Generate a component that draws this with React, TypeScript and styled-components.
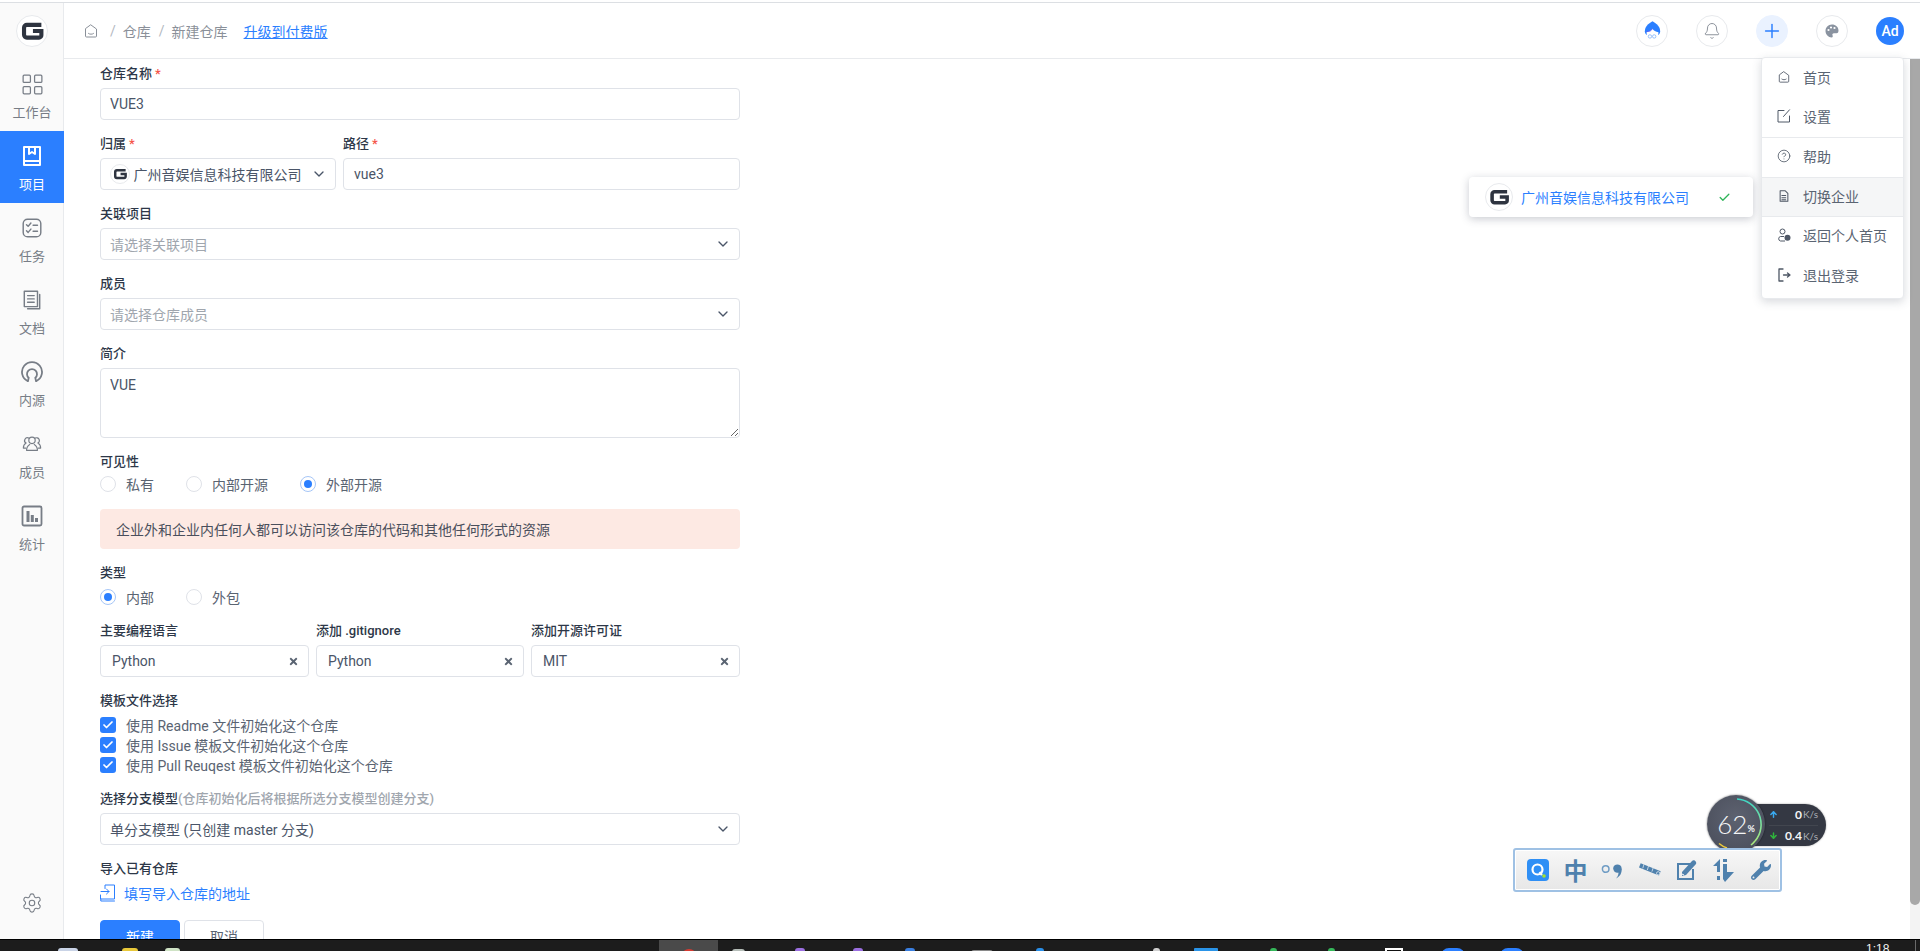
import React from "react";
import styled, { createGlobalStyle } from "styled-components";
import { ArrowDown, ArrowUp, Bell, Check, ChevronDown, CircleHelp, LayoutGrid, Plus, Settings } from "lucide-react";
import { FaTimes, FaWrench } from "react-icons/fa";

const BLUE = "#2b7fff";

const GlobalStyle = createGlobalStyle`
  html, body {
    margin: 0;
    height: 100%;
    overflow: hidden;
    background: #fff;
  }
  body {
    font-family: Roboto, "Noto Sans CJK SC", sans-serif;
    font-size: 14px;
    color: #4a5568;
  }
  * { box-sizing: border-box; }
`;

// page frame
const Page = styled.div`
  position: relative;
  width: 100vw;
  height: 100vh;
  display: flex;
  flex-direction: column;
  overflow: hidden;
  padding-top: 2px;
`;

const TopLine = styled.div`
  height: 1px;
  background: #dcdfe3;
  flex: none;
`;

const Main = styled.div`
  flex: 1;
  min-height: 0;
  display: flex;
`;

const Sidebar = styled.aside`
  width: 64px;
  flex: none;
  display: flex;
  flex-direction: column;
  background: #fafafa;
  border-right: 1px solid #e8eaed;
`;

const SideLogo = styled.div`
  height: 56px;
  flex: none;
  display: flex;
  align-items: center;
  justify-content: center;
`;

const SideItem = styled.div<{ $active?: boolean }>`
  width: 64px;
  height: 72px;
  flex: none;
  display: flex;
  flex-direction: column;
  align-items: center;
  padding-top: 14px;
  gap: 9px;
  font-size: 13px;
  line-height: 18px;
  color: ${(p) => (p.$active ? "#fff" : "#777d86")};
  background: ${(p) => (p.$active ? BLUE : "transparent")};
`;

const SideIcon = styled.span`
  height: 22px;
  flex: none;
  display: flex;
  align-items: center;
  justify-content: center;
`;

const SideBottom = styled.div`
  margin-top: auto;
  height: 47px;
  display: flex;
  justify-content: center;
  color: #777d86;
`;

const Right = styled.div`
  flex: 1;
  min-width: 0;
  display: flex;
  flex-direction: column;
`;

const Header = styled.header`
  height: 56px;
  flex: none;
  display: flex;
  align-items: center;
  padding: 0 16px 0 20px;
  border-bottom: 1px solid #e8eaed;
`;

const Crumbs = styled.nav`
  display: flex;
  align-items: center;
  color: #8a9099;
  font-size: 14px;
  & > svg { margin-right: 4px; }
`;

const CrumbSep = styled.span`
  margin: 0 7px 0 8px;
  color: #b3b8bf;
`;

const UpgradeLink = styled.a`
  margin-left: 16px;
  color: ${BLUE};
  text-decoration: underline;
`;

const HeaderTools = styled.div`
  margin-left: auto;
  display: flex;
  align-items: center;
  gap: 28px;
`;

const RoundButton = styled.div<{ $active?: boolean }>`
  width: 32px;
  height: 32px;
  border-radius: 50%;
  display: flex;
  align-items: center;
  justify-content: center;
  border: 1px solid ${(p) => (p.$active ? "#eaf2ff" : "#e8eaed")};
  background: ${(p) => (p.$active ? "#eaf2ff" : "#fff")};
  color: ${(p) => (p.$active ? BLUE : "#8a9099")};
`;

const Avatar = styled.div`
  width: 28px;
  height: 28px;
  border-radius: 50%;
  background: ${BLUE};
  color: #fff;
  font-size: 14px;
  font-weight: 500;
  display: flex;
  align-items: center;
  justify-content: center;
`;

const Body = styled.div`
  flex: 1;
  min-height: 0;
  display: flex;
`;

const Content = styled.main`
  flex: 1;
  min-width: 0;
  overflow: hidden;
  padding: 5px 0 0 36px;
`;

const ScrollTrack = styled.div`
  width: 10px;
  flex: none;
  background: #f3f3f3;
`;

const ScrollThumb = styled.div`
  height: 846px;
  background: #a8a8a8;
  border-radius: 0 0 5px 5px;
`;

// form
const Form = styled.form`
  width: 640px;
  display: flex;
  flex-direction: column;
  gap: 14px;
`;

const FormItem = styled.div`
  display: flex;
  flex-direction: column;
  min-width: 0;
`;

const Label = styled.label`
  height: 20px;
  line-height: 20px;
  margin-bottom: 4px;
  font-size: 13px;
  font-weight: 500;
  color: #2d3748;
`;

const Star = styled.span`
  color: #f5554a;
  margin-left: 3px;
`;

const Hint = styled.span`
  color: #a0a6ae;
`;

const Field = styled.div<{ $left?: number; $right?: number }>`
  height: 32px;
  display: flex;
  align-items: center;
  padding: 0 ${(p) => p.$right ?? 8}px 0 ${(p) => p.$left ?? 9}px;
  border: 1px solid #dfe2e8;
  border-radius: 4px;
  background: #fff;
  color: #4a5568;
  font-size: 14px;
  white-space: nowrap;
`;

const FieldText = styled.span<{ $placeholder?: boolean }>`
  flex: 1;
  min-width: 0;
  color: ${(p) => (p.$placeholder ? "#a0a6ae" : "#4a5568")};
`;

const Chevron = styled(ChevronDown)`
  flex: none;
  color: #4a5568;
`;

const ClearIcon = styled(FaTimes)`
  flex: none;
  color: #5a6472;
`;

const OwnerGrid = styled.div`
  display: grid;
  grid-template-columns: 236px 397px;
  gap: 7px;
`;

const TripleGrid = styled.div`
  display: grid;
  grid-template-columns: 209px 208px 209px;
  gap: 7px;
`;

const TextArea = styled.textarea`
  height: 70px;
  padding: 5px 9px;
  border: 1px solid #dfe2e8;
  border-radius: 4px;
  color: #4a5568;
  font: 14px/22px Roboto, "Noto Sans CJK SC", sans-serif;
  display: block;
  width: 100%;
  outline: none;
`;

const RadioRow = styled.div<{ $shift?: number }>`
  display: flex;
  height: 20px;
  gap: 32px;
  margin-top: ${(p) => p.$shift ?? 0}px;
`;

const RadioItem = styled.div`
  display: flex;
  align-items: center;
  gap: 10px;
  font-size: 14px;
  color: #5a6472;
`;

const RadioDot = styled.span<{ $checked?: boolean }>`
  width: 16px;
  height: 16px;
  border-radius: 50%;
  background: #fff;
  border: 1px solid ${(p) => (p.$checked ? "#a6c6f7" : "#dfe2e8")};
  display: flex;
  align-items: center;
  justify-content: center;
  &::after {
    content: "";
    width: 8px;
    height: 8px;
    border-radius: 50%;
    background: ${(p) => (p.$checked ? BLUE : "transparent")};
  }
`;

const Notice = styled.div`
  margin-top: 15px;
  height: 40px;
  display: flex;
  align-items: center;
  padding-left: 16px;
  border-radius: 4px;
  background: #fde9e3;
  color: #4a4f5c;
  font-size: 14px;
`;

const CheckRow = styled.div`
  height: 20px;
  display: flex;
  align-items: center;
  gap: 10px;
  font-size: 14px;
  color: #5a6472;
`;

const CheckBox = styled.span`
  width: 16px;
  height: 16px;
  flex: none;
  border-radius: 3px;
  background: ${BLUE};
  color: #fff;
  display: flex;
  align-items: center;
  justify-content: center;
`;

const ImportLink = styled.a`
  height: 20px;
  display: flex;
  align-items: center;
  gap: 8px;
  color: ${BLUE};
  font-size: 14px;
`;

const Actions = styled.div`
  margin-top: 17px;
  display: flex;
  gap: 4px;
`;

const Button = styled.button<{ $primary?: boolean }>`
  width: 80px;
  height: 32px;
  flex: none;
  border-radius: 4px;
  border: 1px solid ${(p) => (p.$primary ? BLUE : "#dfe2e8")};
  background: ${(p) => (p.$primary ? BLUE : "#fff")};
  color: ${(p) => (p.$primary ? "#fff" : "#5a6472")};
  font: 14px Roboto, "Noto Sans CJK SC", sans-serif;
  padding: 0;
`;

// dropdown overlays
const Menu = styled.div`
  position: absolute;
  left: 1761px;
  top: 57px;
  width: 143px;
  background: #fff;
  border: 1px solid #e8eaed;
  border-radius: 4px;
  box-shadow: 0 3px 10px rgba(60, 70, 90, 0.2);
  z-index: 5;
`;

const MenuGroup = styled.div`
  border-bottom: 1px solid #e8eaed;
  &:last-child { border-bottom: none; }
`;

const MenuItem = styled.div<{ $active?: boolean; $h?: number; $lift?: number }>`
  height: ${(p) => p.$h ?? 39}px;
  display: flex;
  align-items: center;
  padding: 0 0 ${(p) => p.$lift ?? 4}px 15px;
  gap: 12px;
  font-size: 14px;
  color: #5a6472;
  background: ${(p) => (p.$active ? "#f5f6f7" : "transparent")};
`;

const MenuIcon = styled.span`
  width: 14px;
  display: flex;
  justify-content: center;
  color: #4f5866;
`;

const CompanyPopover = styled.div`
  position: absolute;
  left: 1469px;
  top: 177px;
  width: 284px;
  height: 40px;
  display: flex;
  align-items: center;
  padding-left: 16px;
  gap: 8px;
  background: #fff;
  border-radius: 4px;
  box-shadow: 0 2px 8px rgba(60, 70, 90, 0.28);
  color: ${BLUE};
  font-size: 14px;
  z-index: 5;
`;

const PopCheck = styled(Check)`
  margin-left: 21px;
  color: #2fb559;
`;

const LogoCircle = styled.span<{ $size: number }>`
  width: ${(p) => p.$size}px;
  height: ${(p) => p.$size}px;
  flex: none;
  border-radius: 50%;
  background: #fff;
  border: 1px solid #e8eaed;
  display: inline-flex;
  align-items: center;
  justify-content: center;
`;

// desktop widgets lying over the browser
const SpeedWidget = styled.div`
  position: absolute;
  left: 1707px;
  top: 795px;
  width: 120px;
  height: 58px;
  z-index: 6;
`;

const SpeedPill = styled.div`
  position: absolute;
  left: 40px;
  top: 9px;
  width: 79px;
  height: 42px;
  border-radius: 0 21px 21px 0;
  background: #343843;
  box-shadow: 0 0 2px rgba(0, 0, 0, 0.4);
  display: flex;
  flex-direction: column;
  padding: 0 8px 0 22px;
`;

const SpeedRow = styled.div`
  flex: 1;
  display: flex;
  align-items: center;
  font-family: Lato, sans-serif;
  font-size: 12px;
  font-weight: 700;
  color: #f2f3f5;
  & + & { border-top: 1px solid #42464f; }
`;

const SpeedArrow = styled.span<{ $color: string }>`
  display: flex;
  color: ${(p) => p.$color};
  margin-right: auto;
`;

const SpeedUnit = styled.span`
  margin-left: 1px;
  font-size: 10px;
  font-weight: 400;
  color: #a9adb5;
`;

const CpuDial = styled.div`
  position: absolute;
  left: 0;
  top: 0;
  width: 58px;
  height: 58px;
  border-radius: 50%;
  background: radial-gradient(circle at 50% 40%, #5d6270, #474b58);
  box-shadow: 0 0 2px rgba(0, 0, 0, 0.6);
  display: flex;
  align-items: center;
  justify-content: center;
  font-family: Lato, sans-serif;
  font-weight: 300;
  font-size: 26px;
  color: #f4f5f6;
  & > svg { position: absolute; inset: 0; }
`;

const CpuUnit = styled.span`
  font-size: 9px;
  font-weight: 700;
  margin-top: 8px;
`;

const ImeBar = styled.div`
  position: absolute;
  left: 1513px;
  top: 848px;
  width: 269px;
  height: 44px;
  display: flex;
  align-items: center;
  gap: 14.7px;
  padding-left: 12px;
  border: 2px solid #9fc1e4;
  border-radius: 3px;
  background: linear-gradient(#f7f7f7, #e7e7e7);
  box-shadow: inset 0 0 0 1px #fff;
  z-index: 7;
`;

const ImeSlot = styled.span`
  width: 22.5px;
  height: 24px;
  flex: none;
  display: flex;
  align-items: center;
  justify-content: center;
  color: #4f81ad;
`;

const ImeChar = styled.span`
  font: 700 24px/24px "Noto Sans CJK SC", sans-serif;
  color: #4f81ad;
`;

// taskbar, only its top sliver is on the picture
const Taskbar = styled.footer`
  height: 12px;
  flex: none;
  display: flex;
  background: #1c1c1c;
  border-top: 1px solid #000;
  overflow: hidden;
`;

const TrayIcon = styled.span<{ $gap: number; $w: number; $color: string; $top?: number; $radius?: number }>`
  flex: none;
  width: ${(p) => p.$w}px;
  height: 20px;
  margin-left: ${(p) => p.$gap}px;
  margin-top: ${(p) => p.$top ?? 8}px;
  background: ${(p) => p.$color};
  border-radius: ${(p) => p.$radius ?? 3}px;
`;

const TrayActive = styled.span<{ $gap: number }>`
  flex: none;
  width: 59px;
  height: 12px;
  margin-left: ${(p) => p.$gap}px;
  background: #4a4a4a;
  display: flex;
  justify-content: center;
  padding-top: 9px;
`;

const TrayDot = styled.span`
  width: 16px;
  height: 16px;
  border-radius: 50%;
  background: #d83b32;
`;

const TrayBox = styled.span<{ $gap: number }>`
  flex: none;
  width: 18px;
  height: 20px;
  margin-left: ${(p) => p.$gap}px;
  margin-top: 8px;
  border: 2px solid #fff;
  background: #111;
`;

const Clock = styled.span`
  flex: none;
  width: 26px;
  margin-left: 342px;
  margin-top: 2px;
  font: 12px/14px "Liberation Sans", sans-serif;
  color: #f2f2f2;
`;

const TraySep = styled.span`
  flex: none;
  width: 1px;
  height: 12px;
  margin-left: 23px;
  background: #6a6a6a;
`;

// logo and icons
function GLogo({ size }: { size: number }) {
  return (
    <svg width={size} height={size} viewBox="0 0 32 32" fill="none">
      <path
        d="M26 9.500H10.500a3 3 0 0 0-3 3v7.500a3 3 0 0 0 3 3H23.500a2.500 2.500 0 0 0 2.500-2.500V16h-9"
        stroke="#2e3440"
        strokeWidth="4.400"
      />
    </svg>
  );
}

type IconProps = { size?: number };

const line = { fill: "none", stroke: "currentColor", strokeLinecap: "round", strokeLinejoin: "round" } as const;

function HomeIcon({ size = 14 }: IconProps) {
  return (
    <svg width={size} height={size} viewBox="0 0 14 14" {...line} strokeWidth="1">
      <path d="M7 1 12.500 5V12a1 1 0 0 1-1 1h-9a1 1 0 0 1-1-1V5z" />
      <path d="M4.500 9.500c1.200 1 3.800 1 5 0" />
    </svg>
  );
}

function BookIcon({ size = 22 }: IconProps) {
  return (
    <svg width={size} height={size} viewBox="0 0 22 22" {...line} strokeWidth="2">
      <path d="M3 2h16v18H3z" />
      <path d="M3 16h16M8 2v7l3-2 3 2V2" />
    </svg>
  );
}

function TaskIcon({ size = 20 }: IconProps) {
  return (
    <svg width={size} height={size} viewBox="0 0 20 20" {...line} strokeWidth="1.300">
      <rect x="2" y="2" width="16" height="16" rx="4" />
      <path d="M5 7l1.500 1.500L9 5.500M5 12.500 6.500 14 9 11M11 7.500h4M11 13h4" />
    </svg>
  );
}

function DocIcon({ size = 20 }: IconProps) {
  return (
    <svg width={size} height={size} viewBox="0 0 20 20" {...line} strokeWidth="1.300">
      <path d="M3 2h12v14H3z" />
      <path d="M6 6h6M6 9h6M6 12h6M17 5v13H6" />
    </svg>
  );
}

function SourceIcon({ size = 22 }: IconProps) {
  return (
    <svg width={size} height={size} viewBox="0 0 22 22" {...line} strokeWidth="1.800">
      <path d="M6.500 20A10 10 0 1 1 15.500 20" />
      <path d="M7.500 17.500l-.5 2.500M14.500 17.500l.5 2.500M7.800 17A5 5 0 1 1 14.200 17" />
    </svg>
  );
}

function MembersIcon({ size = 20 }: IconProps) {
  return (
    <svg width={size} height={size} viewBox="0 0 22 22" {...line} strokeWidth="1.300">
      <circle cx="11" cy="7" r="3.500" />
      <path d="M5 18c0-3 1-5 3.500-6.500M17 18c0-3-1-5-3.500-6.500M5 18h12" />
      <path d="M7.500 4.500A3 3 0 0 0 4.500 10C2.500 11 1.500 13 1.500 15.500H4M14.500 4.500A3 3 0 0 1 17.500 10c2 1 3 3 3 5.500H18" />
    </svg>
  );
}

function StatsIcon({ size = 22 }: IconProps) {
  return (
    <svg width={size} height={size} viewBox="0 0 22 22" fill="none">
      <rect x="1.500" y="1.500" width="19" height="19" rx="1.500" stroke="currentColor" strokeWidth="1.800" />
      <path d="M5.500 6h3v11h-3zM9.800 10h3v7h-3zM14 13h3v4h-3z" fill="currentColor" />
    </svg>
  );
}

function EditIcon({ size = 14 }: IconProps) {
  return (
    <svg width={size} height={size} viewBox="0 0 14 14" {...line} strokeWidth="1">
      <path d="M7 1.500H1v11.500h11.500V7M6.500 7.500 12.500.8" />
    </svg>
  );
}

function SwitchIcon({ size = 14 }: IconProps) {
  return (
    <svg width={size} height={size} viewBox="0 0 14 14" {...line} strokeWidth="1.200">
      <path d="M2.500 1h6l3 3v9h-9zM4.500 6.500h4.500M4.500 9h4.500M4.500 11.500h4.500" />
    </svg>
  );
}

function PersonIcon({ size = 14 }: IconProps) {
  return (
    <svg width={size} height={size} viewBox="0 0 14 14" fill="none">
      <circle cx="5.500" cy="3.500" r="2.500" stroke="currentColor" />
      <path d="M7 8.500H3.500a2.300 2.300 0 0 0 0 4.500H8" stroke="currentColor" />
      <circle cx="10.500" cy="9.800" r="3" fill="currentColor" />
    </svg>
  );
}

function LogoutIcon({ size = 14 }: IconProps) {
  return (
    <svg width={size} height={size} viewBox="0 0 14 14" {...line} strokeWidth="1.300">
      <path d="M6 1H2v12h4M6.500 7h6.500M10.500 5 13 7l-2.500 2" />
    </svg>
  );
}

function ImportIcon() {
  return (
    <svg width="16" height="18" viewBox="0 0 16 18" {...line} strokeWidth="1">
      <path d="M5 4.500V1h9.500v14h-14V11M1 7.500h8M6.500 5 9 7.500 6.500 10M.8 15v2h13.700" />
    </svg>
  );
}

function GirlAvatar() {
  return (
    <svg width="17" height="21" viewBox="0 0 20 24">
      <path d="M10 1c5 3 9 6 9 12 0 2-1 4-2 4H3c-1 0-2-2-2-4C1 7 5 4 10 1z" fill={BLUE} />
      <path d="M3 14c3 0 6-2 7-4 1 2 4 4 7 4 0 5-3 8-7 8s-7-3-7-8z" fill="#fff" />
      <circle cx="7" cy="19" r="2" fill="none" stroke="#6fa6f7" strokeWidth="0.800" />
      <circle cx="12" cy="19" r="2" fill="none" stroke="#6fa6f7" strokeWidth="0.800" />
      <path d="M3 13c3 0 4 1 7-3" fill="none" stroke="#7a4df0" strokeWidth="0.800" />
    </svg>
  );
}

function PaletteIcon() {
  return (
    <svg width="14" height="14" viewBox="0 0 14 14">
      <path
        d="M7 .5C3 .5.500 3.500.500 7S3.500 13.500 6.500 13.500C8 13.500 8 12 7.500 11.300 7 10.300 7.500 9.200 9 9.200h2.500C13 9.200 13.500 8 13.500 6.500 13.500 3 10.500.5 7 .5z"
        fill="#8a93a0"
      />
      <circle cx="3.500" cy="6" r="1.100" fill="#fff" />
      <circle cx="6" cy="3.500" r="1.100" fill="#fff" />
      <circle cx="9.500" cy="4" r="1.100" fill="#fff" />
    </svg>
  );
}

function CpuRing() {
  return (
    <svg width="58" height="58" viewBox="0 0 58 58" fill="none">
      <defs>
        <linearGradient id="ring" x1="0" y1="0" x2="0" y2="1">
          <stop offset="0" stopColor="#3ed6c6" />
          <stop offset="1" stopColor="#a8e87f" />
        </linearGradient>
      </defs>
      <path d="M30 4A25.500 25.500 0 0 1 48 46" stroke="url(#ring)" strokeWidth="1.600" />
      <path d="M48 46A25.500 25.500 0 0 1 44 50" stroke="#a8e87f" strokeWidth="1.600" />
      <path d="M12 48.500A25.500 25.500 0 0 0 20 53" stroke="#eecb3c" strokeWidth="1.600" />
    </svg>
  );
}

function QLogo() {
  return (
    <svg width="22" height="22" viewBox="0 0 22 22">
      <rect width="22" height="22" rx="4" fill="#2f8ff5" />
      <circle cx="10.500" cy="10.500" r="5" fill="none" stroke="#fff" strokeWidth="2.200" />
      <path d="M12.500 13l2.500 3" stroke="#fff" strokeWidth="2.200" />
      <circle cx="17" cy="17" r="1.800" fill="#a6e22e" />
    </svg>
  );
}

function PunctIcon() {
  return (
    <svg width="24" height="22" viewBox="0 0 24 22" fill="#4f81ad">
      <circle cx="5" cy="10" r="3.500" fill="none" stroke="#6f9cc4" strokeWidth="1.600" />
      <circle cx="17.500" cy="9.500" r="4.500" />
      <path d="M22 9.500c.5 5-2 9-6 10.500 2-2 3-5 2.500-7z" />
    </svg>
  );
}

function SoftKeyIcon() {
  return (
    <svg width="27" height="18" viewBox="0 0 27 18" fill="none">
      <path d="M1 3.500 25 13" stroke="#4f81ad" strokeWidth="5.500" />
      <path d="M6 2 4.500 7M11.500 4 10 9M17 6.500 15.500 11" stroke="#dbe5ee" strokeWidth="1" />
      <circle cx="23" cy="13" r="2" stroke="#dbe5ee" strokeWidth="1" />
    </svg>
  );
}

function NoteIcon() {
  return (
    <svg width="22" height="22" viewBox="0 0 22 22">
      <path d="M1 4h14v2H3v13h13V10h2v11H1z" fill="#4f81ad" />
      <path d="M6 13 16 2c2-2 5 1 4 3L10 16l-4 1z" fill="#4f81ad" />
      <path d="M6 15l2 1" stroke="#fff" />
    </svg>
  );
}

function ArrowsIcon() {
  return (
    <svg width="22" height="24" viewBox="0 0 22 24" fill="#4f81ad">
      <path d="M7 1v13H4V8L0 8z" />
      <rect x="4" y="18" width="3" height="4" />
      <rect x="10" y="1" width="4" height="3" />
      <path d="M10 6h4v8h7L12 24 10 21z" />
    </svg>
  );
}

const sideItems = [
  { label: "工作台", icon: <LayoutGrid size={25} strokeWidth={1.2} /> },
  { label: "项目", icon: <BookIcon />, active: true },
  { label: "任务", icon: <TaskIcon size={22} /> },
  { label: "文档", icon: <DocIcon size={22} /> },
  { label: "内源", icon: <SourceIcon /> },
  { label: "成员", icon: <MembersIcon /> },
  { label: "统计", icon: <StatsIcon /> },
];

function Req({ children }: { children: React.ReactNode }) {
  return (
    <Label>
      {children}
      <Star>*</Star>
    </Label>
  );
}

function App() {
  return (
    <Page>
      <GlobalStyle />
      <TopLine />
      <Main>
        <Sidebar>
          <SideLogo>
            <LogoCircle $size={32}>
              <GLogo size={30} />
            </LogoCircle>
          </SideLogo>
          {sideItems.map((item) => (
            <SideItem key={item.label} $active={item.active}>
              <SideIcon>{item.icon}</SideIcon>
              {item.label}
            </SideItem>
          ))}
          <SideBottom>
            <Settings size={22} strokeWidth={1.2} />
          </SideBottom>
        </Sidebar>
        <Right>
          <Header>
            <Crumbs>
              <HomeIcon />
              <CrumbSep>/</CrumbSep>
              仓库
              <CrumbSep>/</CrumbSep>
              新建仓库
              <UpgradeLink>升级到付费版</UpgradeLink>
            </Crumbs>
            <HeaderTools>
              <RoundButton>
                <GirlAvatar />
              </RoundButton>
              <RoundButton>
                <Bell size={18} strokeWidth={1.3} />
              </RoundButton>
              <RoundButton $active>
                <Plus size={22} strokeWidth={1.6} />
              </RoundButton>
              <RoundButton>
                <PaletteIcon />
              </RoundButton>
              <Avatar>Ad</Avatar>
            </HeaderTools>
          </Header>
          <Body>
            <Content>
              <Form>
                <FormItem>
                  <Req>仓库名称</Req>
                  <Field>
                    <FieldText>VUE3</FieldText>
                  </Field>
                </FormItem>
                <OwnerGrid>
                  <FormItem>
                    <Req>归属</Req>
                    <Field>
                      <LogoCircle $size={20}>
                        <GLogo size={18} />
                      </LogoCircle>
                      <FieldText>&nbsp;广州音娱信息科技有限公司</FieldText>
                      <Chevron size={16} />
                    </Field>
                  </FormItem>
                  <FormItem>
                    <Req>路径</Req>
                    <Field $left={10}>
                      <FieldText>vue3</FieldText>
                    </Field>
                  </FormItem>
                </OwnerGrid>
                <FormItem>
                  <Label>关联项目</Label>
                  <Field>
                    <FieldText $placeholder>请选择关联项目</FieldText>
                    <Chevron size={16} />
                  </Field>
                </FormItem>
                <FormItem>
                  <Label>成员</Label>
                  <Field>
                    <FieldText $placeholder>请选择仓库成员</FieldText>
                    <Chevron size={16} />
                  </Field>
                </FormItem>
                <FormItem>
                  <Label>简介</Label>
                  <TextArea defaultValue="VUE" />
                </FormItem>
                <FormItem>
                  <Label>可见性</Label>
                  <RadioRow $shift={-2}>
                    <RadioItem>
                      <RadioDot />
                      私有
                    </RadioItem>
                    <RadioItem>
                      <RadioDot />
                      内部开源
                    </RadioItem>
                    <RadioItem>
                      <RadioDot $checked />
                      外部开源
                    </RadioItem>
                  </RadioRow>
                  <Notice>企业外和企业内任何人都可以访问该仓库的代码和其他任何形式的资源</Notice>
                </FormItem>
                <FormItem>
                  <Label>类型</Label>
                  <RadioRow>
                    <RadioItem>
                      <RadioDot $checked />
                      内部
                    </RadioItem>
                    <RadioItem>
                      <RadioDot />
                      外包
                    </RadioItem>
                  </RadioRow>
                </FormItem>
                <TripleGrid>
                  <FormItem>
                    <Label>主要编程语言</Label>
                    <Field $left={11} $right={9}>
                      <FieldText>Python</FieldText>
                      <ClearIcon size={11} />
                    </Field>
                  </FormItem>
                  <FormItem>
                    <Label>添加 .gitignore</Label>
                    <Field $left={11} $right={9}>
                      <FieldText>Python</FieldText>
                      <ClearIcon size={11} />
                    </Field>
                  </FormItem>
                  <FormItem>
                    <Label>添加开源许可证</Label>
                    <Field $left={11} $right={9}>
                      <FieldText>MIT</FieldText>
                      <ClearIcon size={11} />
                    </Field>
                  </FormItem>
                </TripleGrid>
                <FormItem>
                  <Label>模板文件选择</Label>
                  {["使用 Readme 文件初始化这个仓库", "使用 Issue 模板文件初始化这个仓库", "使用 Pull Reuqest 模板文件初始化这个仓库"].map(
                    (text) => (
                      <CheckRow key={text}>
                        <CheckBox>
                          <Check size={12} strokeWidth={3.5} />
                        </CheckBox>
                        {text}
                      </CheckRow>
                    ),
                  )}
                </FormItem>
                <FormItem>
                  <Label>
                    选择分支模型<Hint>(仓库初始化后将根据所选分支模型创建分支)</Hint>
                  </Label>
                  <Field>
                    <FieldText>单分支模型 (只创建 master 分支)</FieldText>
                    <Chevron size={16} />
                  </Field>
                </FormItem>
                <FormItem>
                  <Label>导入已有仓库</Label>
                  <ImportLink>
                    <ImportIcon />
                    填写导入仓库的地址
                  </ImportLink>
                  <Actions>
                    <Button $primary type="button">
                      新建
                    </Button>
                    <Button type="button">取消</Button>
                  </Actions>
                </FormItem>
              </Form>
            </Content>
            <ScrollTrack>
              <ScrollThumb />
            </ScrollTrack>
          </Body>
        </Right>
      </Main>
      <Taskbar>
        <TrayIcon $gap={58} $w={20} $color="#c9d3e6" />
        <TrayIcon $gap={44} $w={16} $color="#e8c83a" />
        <TrayIcon $gap={27} $w={15} $color="#cfe3c5" />
        <TrayActive $gap={479}>
          <TrayDot />
        </TrayActive>
        <TrayIcon $gap={14} $w={13} $color="#b5bdb8" $top={9} />
        <TrayIcon $gap={50} $w={10} $color="#9b6fe0" />
        <TrayIcon $gap={48} $w={10} $color="#9b6fe0" />
        <TrayIcon $gap={42} $w={10} $color="#3a7fe0" />
        <TrayIcon $gap={56} $w={22} $color="#8a8a8a" $top={10} />
        <TrayIcon $gap={43} $w={8} $color="#2a8fe8" />
        <TrayIcon $gap={109} $w={7} $color="#cfcfcf" />
        <TrayIcon $gap={34} $w={24} $color="#2a94e8" $radius={1} />
        <TrayIcon $gap={52} $w={7} $color="#35b85a" />
        <TrayIcon $gap={51} $w={7} $color="#35b85a" />
        <TrayBox $gap={50} />
        <TrayIcon $gap={38} $w={24} $color="#2b7fff" $radius={8} />
        <TrayIcon $gap={35} $w={24} $color="#2b7fff" $radius={8} />
        <Clock>1:18</Clock>
        <TraySep />
      </Taskbar>

      <Menu>
        <MenuGroup>
          <MenuItem $h={40} $lift={2}>
            <MenuIcon>
              <HomeIcon size={12} />
            </MenuIcon>
            首页
          </MenuItem>
          <MenuItem $h={39}>
            <MenuIcon>
              <EditIcon />
            </MenuIcon>
            设置
          </MenuItem>
        </MenuGroup>
        <MenuGroup>
          <MenuItem>
            <MenuIcon>
              <CircleHelp size={14} strokeWidth={1.4} />
            </MenuIcon>
            帮助
          </MenuItem>
        </MenuGroup>
        <MenuGroup>
          <MenuItem $active $h={38} $lift={2}>
            <MenuIcon>
              <SwitchIcon size={12} />
            </MenuIcon>
            切换企业
          </MenuItem>
        </MenuGroup>
        <MenuGroup>
          <MenuItem $h={39}>
            <MenuIcon>
              <PersonIcon />
            </MenuIcon>
            返回个人首页
          </MenuItem>
          <MenuItem $h={42}>
            <MenuIcon>
              <LogoutIcon />
            </MenuIcon>
            退出登录
          </MenuItem>
        </MenuGroup>
      </Menu>
      <CompanyPopover>
        <LogoCircle $size={28}>
          <GLogo size={26} />
        </LogoCircle>
        广州音娱信息科技有限公司
        <PopCheck size={13} strokeWidth={2.4} />
      </CompanyPopover>

      <SpeedWidget>
        <SpeedPill>
          <SpeedRow>
            <SpeedArrow $color="#3aa9ee">
              <ArrowUp size={9} strokeWidth={4} />
            </SpeedArrow>
            0<SpeedUnit>K/s</SpeedUnit>
          </SpeedRow>
          <SpeedRow>
            <SpeedArrow $color="#2fb53c">
              <ArrowDown size={9} strokeWidth={4} />
            </SpeedArrow>
            0.4<SpeedUnit>K/s</SpeedUnit>
          </SpeedRow>
        </SpeedPill>
        <CpuDial>
          <CpuRing />
          62<CpuUnit>%</CpuUnit>
        </CpuDial>
      </SpeedWidget>
      <ImeBar>
        <ImeSlot>
          <QLogo />
        </ImeSlot>
        <ImeSlot>
          <ImeChar>中</ImeChar>
        </ImeSlot>
        <ImeSlot>
          <PunctIcon />
        </ImeSlot>
        <ImeSlot>
          <SoftKeyIcon />
        </ImeSlot>
        <ImeSlot>
          <NoteIcon />
        </ImeSlot>
        <ImeSlot>
          <ArrowsIcon />
        </ImeSlot>
        <ImeSlot>
          <FaWrench size={20} />
        </ImeSlot>
      </ImeBar>
    </Page>
  );
}

export default App;
